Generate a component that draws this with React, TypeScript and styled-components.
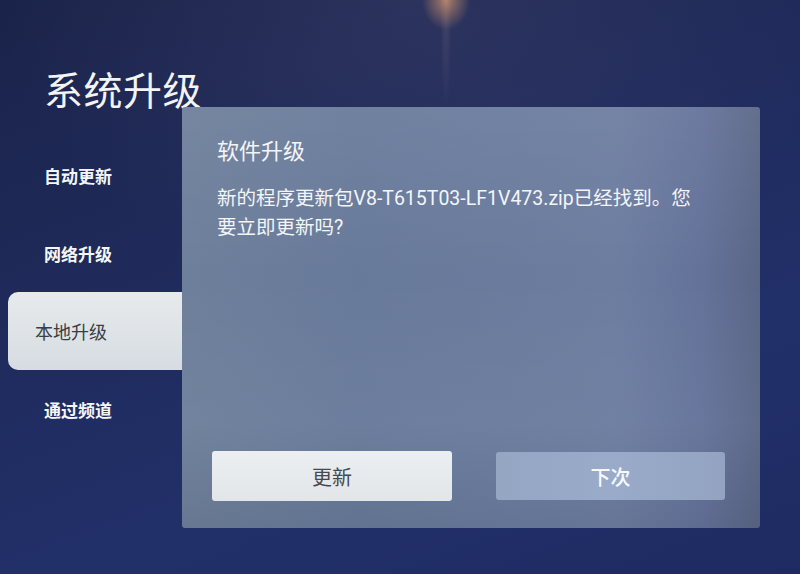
import styled, { createGlobalStyle } from 'styled-components'

const MENU = [
  { label: '自动更新', active: false },
  { label: '网络升级', active: false },
  { label: '本地升级', active: true },
  { label: '通过频道', active: false },
]

const GlobalStyle = createGlobalStyle`
  html, body {
    margin: 0;
    padding: 0;
    background: #1d2750;
  }
  body {
    font-family: Roboto, "Noto Sans CJK SC", "Noto Sans", sans-serif;
    -webkit-font-smoothing: antialiased;
  }
`

const App = () => {
  return (
    <Screen>
      <GlobalStyle />
      <Sidebar>
        <PageTitle>系统升级</PageTitle>
        <Menu>
          {MENU.map((item) => (
            <MenuItem key={item.label} $active={item.active}>
              {item.label}
            </MenuItem>
          ))}
        </Menu>
      </Sidebar>

      <Dialog>
        <DialogTitle>软件升级</DialogTitle>
        <Message>新的程序更新包V8-T615T03-LF1V473.zip已经找到。您要立即更新吗?</Message>
        <Actions>
          <ActionButton $primary>更新</ActionButton>
          <ActionButton>下次</ActionButton>
        </Actions>
      </Dialog>
    </Screen>
  )
}

export default App

const Screen = styled.div`
  width: 800px;
  height: 574px;
  overflow: hidden;
  display: grid;
  grid-template-columns: 182px 578px;
  align-items: start;
  background:
    radial-gradient(ellipse 24px 30px at 446px 0px, rgba(255, 176, 110, 0.6), rgba(255, 176, 110, 0) 100%),
    radial-gradient(ellipse 6px 110px at 446px 0px, rgba(200, 170, 170, 0.15), rgba(0, 0, 0, 0) 100%),
    radial-gradient(ellipse 420px 300px at 420px 0px, rgba(80, 80, 120, 0.3), rgba(0, 0, 0, 0) 100%),
    linear-gradient(160deg, #1a2349 0%, #1f2a5a 35%, #22306a 70%, #1e2b62 100%);
`

const Sidebar = styled.div`
  display: flex;
  flex-direction: column;
  padding-top: 64px;
`

const PageTitle = styled.h1`
  margin: 0 0 24px 44px;
  font-family: "Noto Sans CJK SC", sans-serif;
  font-size: 39px;
  line-height: 48px;
  font-weight: 400;
  color: #f2f4f6;
  white-space: nowrap;
  letter-spacing: 0.5px;
`

const Menu = styled.div`
  display: flex;
  flex-direction: column;
`

const MenuItem = styled.div<{ $active?: boolean }>`
  height: 78px;
  display: flex;
  align-items: center;
  box-sizing: border-box;
  white-space: nowrap;
  margin-left: ${(p) => (p.$active ? '8px' : '0')};
  padding-left: ${(p) => (p.$active ? '27px' : '44px')};
  border-radius: ${(p) => (p.$active ? '10px 0 0 10px' : '0')};
  background: ${(p) =>
    p.$active ? 'linear-gradient(180deg, #e6eaec 0%, #dde2e6 60%, #d6dce2 100%)' : 'transparent'};
  color: ${(p) => (p.$active ? '#3a3d42' : '#f4f6f8')};
  font-size: ${(p) => (p.$active ? '18px' : '17px')};
  font-weight: ${(p) => (p.$active ? 400 : 700)};
`

const Dialog = styled.div`
  margin-top: 107px;
  height: 421px;
  box-sizing: border-box;
  padding: 30px 35px 27px 30px;
  display: flex;
  flex-direction: column;
  border-radius: 3px;
  background:
    linear-gradient(180deg, rgba(255, 255, 255, 0.06) 0%, rgba(255, 255, 255, 0) 40%, rgba(255, 255, 255, 0.03) 75%, rgba(0, 0, 0, 0.06) 100%),
    linear-gradient(90deg, #6e7f9b 0%, #687a9a 30%, #6a7b9d 55%, #6d7da0 75%, #64729a 90%, #5a6686 100%);
`

const DialogTitle = styled.h2`
  margin: 0;
  padding-left: 5px;
  font-size: 22px;
  line-height: 30px;
  font-weight: 400;
  color: #f3f5f8;
`

const Message = styled.p`
  margin: 17px 0 0;
  padding-left: 5px;
  width: 485px;
  font-size: 19.5px;
  line-height: 29px;
  font-weight: 400;
  color: #f3f5f8;
  word-break: break-all;
`

const Actions = styled.div`
  margin-top: auto;
  display: grid;
  grid-template-columns: 240px 229px;
  column-gap: 44px;
  align-items: center;
`

const ActionButton = styled.div<{ $primary?: boolean }>`
  height: ${(p) => (p.$primary ? '50px' : '48px')};
  display: flex;
  align-items: center;
  justify-content: center;
  border-radius: 3px;
  font-size: 20px;
  font-weight: ${(p) => (p.$primary ? 400 : 500)};
  color: ${(p) => (p.$primary ? '#45484d' : '#f6f8fb')};
  background: ${(p) =>
    p.$primary
      ? 'linear-gradient(180deg, #eceff1 0%, #e2e6e9 100%)'
      : 'linear-gradient(90deg, #94a6c2 0%, #9aabca 50%, #93a3c1 100%)'};
`
